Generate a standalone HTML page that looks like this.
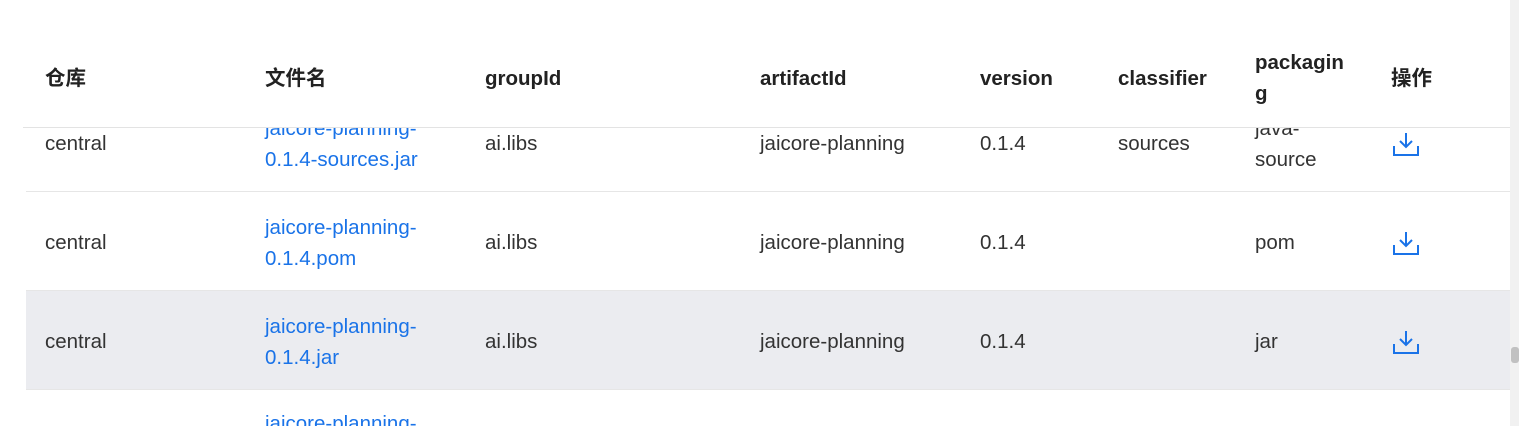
<!DOCTYPE html>
<html><head><meta charset="utf-8"><style>
*{margin:0;padding:0;box-sizing:border-box}
html,body{width:1519px;height:426px;overflow:hidden}
body{background:#fff;position:relative;font-family:"Liberation Sans","Noto Sans CJK SC",sans-serif;font-size:20.5px;color:#333}
.row{position:absolute;left:26px;width:1484px;height:99px;border-bottom:1px solid #e6e6e6}
.c{position:absolute;top:1px;height:99px;display:flex;align-items:center;line-height:31px}
a{color:#1a73e8;text-decoration:none}
.hdr{position:absolute;left:23px;top:0;width:1487px;height:128px;background:#fff;border-bottom:1px solid #e3e3e3;z-index:5}
.h{position:absolute;top:0;height:156px;display:flex;align-items:center;font-weight:bold;color:#222;line-height:31px}
.sb{position:absolute;left:1510px;top:0;width:9px;height:426px;background:#f1f1f1;z-index:6}
.th{position:absolute;left:1px;top:347px;width:8px;height:16px;background:#c1c1c1;border-radius:3px}
</style></head><body>
<div class="hdr">
<div class="h" style="left:22px">仓库</div>
<div class="h" style="left:242px">文件名</div>
<div class="h" style="left:462px">groupId</div>
<div class="h" style="left:737px">artifactId</div>
<div class="h" style="left:957px">version</div>
<div class="h" style="left:1095px">classifier</div>
<div class="h" style="left:1232px;width:100px">packagin<br>g</div>
<div class="h" style="left:1368px">操作</div>
</div>
<div class="sb"><div class="th"></div></div>

<div class="row" style="top:93px">
<div class="c" style="left:19px">central</div>
<div class="c" style="left:239px"><a>jaicore-planning-<br>0.1.4-sources.jar</a></div>
<div class="c" style="left:459px">ai.libs</div>
<div class="c" style="left:734px">jaicore-planning</div>
<div class="c" style="left:954px">0.1.4</div>
<div class="c" style="left:1092px">sources</div>
<div class="c" style="left:1229px">java-<br>source</div>
<div class="c" style="left:1367px"><svg width="26" height="24" viewBox="0 0 26 24" fill="none" stroke="#1a73e8" stroke-width="2"><path d="M13 1v13M7 9l6 6 6-6M1 14v9h24v-9"/></svg></div>
</div>
<div class="row" style="top:192px">
<div class="c" style="left:19px">central</div>
<div class="c" style="left:239px"><a>jaicore-planning-<br>0.1.4.pom</a></div>
<div class="c" style="left:459px">ai.libs</div>
<div class="c" style="left:734px">jaicore-planning</div>
<div class="c" style="left:954px">0.1.4</div>
<div class="c" style="left:1229px">pom</div>
<div class="c" style="left:1367px"><svg width="26" height="24" viewBox="0 0 26 24" fill="none" stroke="#1a73e8" stroke-width="2"><path d="M13 1v13M7 9l6 6 6-6M1 14v9h24v-9"/></svg></div>
</div>
<div class="row" style="top:291px;background:#ebecf0">
<div class="c" style="left:19px">central</div>
<div class="c" style="left:239px"><a>jaicore-planning-<br>0.1.4.jar</a></div>
<div class="c" style="left:459px">ai.libs</div>
<div class="c" style="left:734px">jaicore-planning</div>
<div class="c" style="left:954px">0.1.4</div>
<div class="c" style="left:1229px">jar</div>
<div class="c" style="left:1367px"><svg width="26" height="24" viewBox="0 0 26 24" fill="none" stroke="#1a73e8" stroke-width="2"><path d="M13 1v13M7 9l6 6 6-6M1 14v9h24v-9"/></svg></div>
</div>
<div class="row" style="top:390px;border:none;height:36px;overflow:hidden">
<div class="c" style="left:239px;top:18px;height:auto"><a>jaicore-planning-</a></div>
</div>
</body></html>
